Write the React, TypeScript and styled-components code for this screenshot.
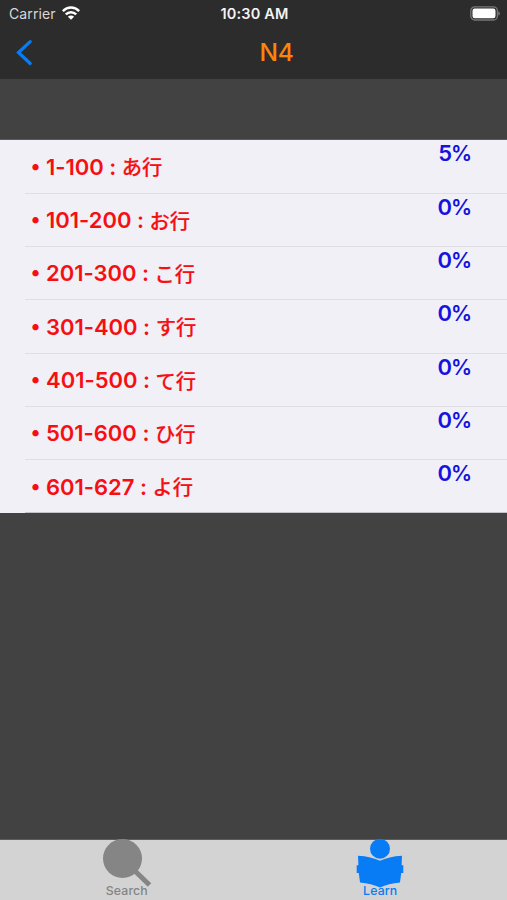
import React from "react";
import styled, { createGlobalStyle } from "styled-components";

const GlobalStyle = createGlobalStyle`
  * { box-sizing: border-box; }
  body { margin: 0; background: #424242; }
`;

const Screen = styled.div`
  width: 507px;
  height: 900px;
  display: flex;
  flex-direction: column;
  overflow: hidden;
  background: #424242;
  font-family: Inter, "Noto Sans CJK JP", sans-serif;
  font-feature-settings: "calt" 0;
`;

const Header = styled.header`
  height: 79px;
  flex: none;
  background: #2c2c2c;
`;

const StatusBar = styled.div`
  height: 27px;
  display: grid;
  grid-template-columns: 1fr auto 1fr;
  align-items: center;
  padding: 0 7px 0 9px;
  color: #f4f4f4;
  font-size: 14.5px;
  line-height: 27px;
`;

const Carrier = styled.div`
  display: flex;
  align-items: center;
  gap: 6px;
  color: #d8d8d8;
  font-size: 14px;
  letter-spacing: 0.12px;
  line-height: 25px;

  svg {
    margin-top: -1px;
  }
`;

const Clock = styled.div`
  font-weight: 600;
  line-height: 25px;
  letter-spacing: 0.15px;
`;

const BatteryIcon = styled.svg`
  justify-self: end;
`;

const NavBar = styled.nav`
  height: 52px;
  display: grid;
  grid-template-columns: 1fr auto 1fr;
  align-items: center;
  padding: 0 15px;
`;

const BackButton = styled.button`
  width: 20px;
  height: 28px;
  padding: 0;
  border: 0;
  background: none;
  display: flex;
  align-items: center;
`;

const Title = styled.h1`
  margin: 0;
  padding: 0 0 2px 46px;
  font-size: 24.5px;
  font-weight: 550;
  line-height: 50px;
  letter-spacing: -0.4px;
  color: #fb8508;
`;

const List = styled.ul`
  list-style: none;
  margin: 61px 0 0;
  padding: 0.4px 0 0;
  flex: none;
  background: #f1f0f6;
  box-shadow: 0 -1px 0 #5c5c5d;
`;

const Row = styled.li`
  height: 53.3px;
  padding-left: 25px;
`;

const RowBody = styled.div<{ $last: boolean }>`
  height: 100%;
  display: flex;
  align-items: flex-start;
  justify-content: space-between;
  padding: 0 36px 0 6.5px;
  border-bottom: 1px solid ${({ $last }) => ($last ? "#c4c4c8" : "#dfdee3")};
`;

const Label = styled.div`
  display: flex;
  align-items: center;
  height: 53px;
  color: #f50f12;
  font-size: 22px;
  font-weight: 600;
  line-height: 53px;
  white-space: pre;
`;

const Bullet = styled.span`
  width: 14.5px;
  padding-bottom: 1px;
  font-size: 20px;
  text-indent: -1px;
`;

const Range = styled.span`
  padding-top: 1px;
  letter-spacing: -0.02px;
`;

const Kana = styled.span`
  font-family: "Noto Sans CJK JP", sans-serif;
  font-size: 20.3px;
  font-weight: 500;
  -webkit-text-stroke: 0.2px #f50f12;
`;

const Percent = styled.div`
  color: #1512df;
  font-size: 22px;
  font-weight: 600;
  line-height: 27px;
  letter-spacing: -1.1px;
`;

const PercentSign = styled.span`
  display: inline-block;
  font-size: 21px;
`;

const TabBar = styled.footer`
  height: 60px;
  margin-top: auto;
  flex: none;
  display: grid;
  grid-template-columns: 1fr 1fr;
  background: #d3d3d3;
  box-shadow: 0 -1px 0 #5c5c5c;
`;

const Tab = styled.div<{ $active?: boolean }>`
  display: flex;
  flex-direction: column;
  align-items: center;
  color: ${({ $active }) => ($active ? "#087cf5" : "#858585")};
  font-size: 12.3px;
  font-weight: 500;
  letter-spacing: 0.15px;
  line-height: 16px;
`;

const TabIcon = styled.svg`
  display: block;
  width: 52px;
  height: 50px;
  margin-top: -2px;
  flex: none;
  overflow: visible;
`;

const TabLabel = styled.span`
  margin-top: -5px;
  position: relative;
`;

const rows = [
  { range: "1-100", kana: "あ行", percent: 5 },
  { range: "101-200", kana: "お行", percent: 0 },
  { range: "201-300", kana: "こ行", percent: 0 },
  { range: "301-400", kana: "す行", percent: 0 },
  { range: "401-500", kana: "て行", percent: 0 },
  { range: "501-600", kana: "ひ行", percent: 0 },
  { range: "601-627", kana: "よ行", percent: 0 },
];

export default function App() {
  return (
    <Screen>
      <GlobalStyle />
      <Header>
        <StatusBar>
          <Carrier>
            Carrier
            <svg width="18" height="14" viewBox="0 0 18 14">
              <g fill="none" stroke="#fff" strokeWidth="2.5">
                <path d="M.8 5.1C5.5.4 12.5.4 17.2 5.1" />
                <path d="M3.8 8.4c3-2.9 7.4-2.9 10.4 0" />
              </g>
              <path d="M5.9 10.7c1.8-1.6 4.4-1.6 6.2 0L9 13.8z" fill="#fff" />
            </svg>
          </Carrier>
          <Clock>10:30 AM</Clock>
          <BatteryIcon width="30" height="15" viewBox="0 0 30 15">
            <rect x=".8" y=".8" width="26.6" height="13.2" rx="4" fill="#2c2c2c" stroke="#777" strokeWidth="1.3" />
            <rect x="2.5" y="2.6" width="23" height="9.6" rx="2.2" fill="#fff" />
            <path d="M28.3 5.2c2.2.8 2.2 3.6 0 4.4z" fill="#777" />
          </BatteryIcon>
        </StatusBar>
        <NavBar>
          <BackButton aria-label="Back">
            <svg width="18" height="28" viewBox="0 0 18 28">
              <path d="M15.2 2.6 3.5 13.5l11.7 11" fill="none" stroke="#087df3" strokeWidth="3.2" strokeLinecap="round" />
            </svg>
          </BackButton>
          <Title>N4</Title>
        </NavBar>
      </Header>
      <List>
        {rows.map((row, index) => (
          <Row key={row.range}>
            <RowBody $last={index === rows.length - 1}>
              <Label>
                <Bullet>•</Bullet>
                <Range>{row.range} : </Range>
                <Kana>{row.kana}</Kana>
              </Label>
              <Percent>
                {row.percent}
                <PercentSign>%</PercentSign>
              </Percent>
            </RowBody>
          </Row>
        ))}
      </List>
      <TabBar>
        <Tab>
          <TabIcon viewBox="0 0 52 50">
            <circle cx="21.5" cy="20.5" r="19.5" fill="#858585" />
            <path d="m34 33 14.5 14" stroke="#858585" strokeWidth="5" fill="none" />
          </TabIcon>
          <TabLabel>Search</TabLabel>
        </Tab>
        <Tab $active>
          <TabIcon viewBox="0 0 52 50" fill="#087cf5">
            <circle cx="26" cy="10.8" r="10" />
            <path d="M4 17.7Q17.5 18.5 26 22.800 34.500 18.500 48 17.700L47.600 27.300H49.300V35H47.200L46 44.500Q34.500 45.500 26 49.500 17.500 45.500 6 44.500L4.800 35H2.700V27.300H4.400Z" />
          </TabIcon>
          <TabLabel>Learn</TabLabel>
        </Tab>
      </TabBar>
    </Screen>
  );
}
